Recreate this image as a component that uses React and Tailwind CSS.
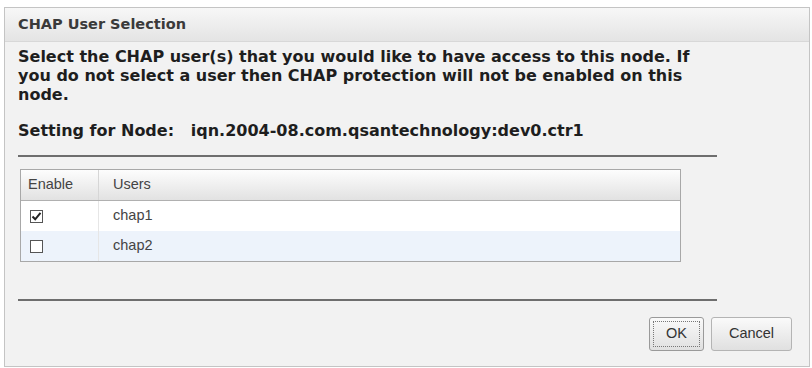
import React from "react";

const CheckBox = ({ checked }) => (
  <div className="w-[13px] h-[13px] border border-[#555] bg-white flex items-center justify-center">
    {checked && (
      <svg width="11" height="11" viewBox="0 0 11 11">
        <path d="M1.5 5.5 L4.2 8.3 L9.5 1.8" fill="none" stroke="#222" strokeWidth="2" />
      </svg>
    )}
  </div>
);

const users = [
  { name: "chap1", checked: true, bg: "bg-white" },
  { name: "chap2", checked: false, bg: "bg-[#edf3fb]" },
];

export default function App() {
  return (
    <div className="w-[812px] h-[368px] bg-white pt-[7px] pl-[4px] pr-[2px] pb-[1px]">
      <div className="h-full border border-[#c4c4c4] bg-[#f2f2f2] flex flex-col" style={{ fontFamily: "Tahoma, 'DejaVu Sans', sans-serif" }}>
        <div className="h-[34px] bg-gradient-to-b from-[#f7f7f7] to-[#e4e4e4] border-b border-[#d8d8d8] flex items-center px-[13px]">
          <span className="text-[14.5px] font-bold text-[#3a3a3a]">CHAP User Selection</span>
        </div>
        <div className="px-[13px] pt-[5px] flex flex-col">
          <p className="text-[16px] leading-[19px] font-bold text-[#1e1e1e] w-[700px]">
            Select the CHAP user(s) that you would like to have access to this node. If you do not select a user then CHAP protection will not be enabled on this node.
          </p>
          <p className="mt-[17px] text-[16px] leading-[19px] font-bold text-[#1e1e1e]">
            Setting for Node:&nbsp;&nbsp;&nbsp;iqn.2004-08.com.qsantechnology:dev0.ctr1
          </p>
          <div className="mt-[15px] w-[699px] h-[2px] bg-[#6e6e6e]" />
          <div className="mt-[12px] ml-[2px] w-[661px] border border-[#a8a8a8] text-[14.5px] text-[#444]" style={{ fontFamily: "'Liberation Sans', Arial, sans-serif" }}>
            <div className="flex h-[31px] bg-gradient-to-b from-[#fdfdfd] to-[#e2e2e2] border-b border-[#b0b0b0]">
              <div className="w-[78px] border-r border-[#d6d6d6] flex items-center pl-[7px]">Enable</div>
              <div className="flex-1 flex items-center pl-[14px]">Users</div>
            </div>
            {users.map((u) => (
              <div key={u.name} className={`flex h-[30px] ${u.bg}`}>
                <div className="w-[78px] border-r border-[#e6e6e6] flex items-center pl-[9px]">
                  <CheckBox checked={u.checked} />
                </div>
                <div className="flex-1 flex items-center pl-[14px]">{u.name}</div>
              </div>
            ))}
          </div>
          <div className="mt-[37px] w-[699px] h-[2px] bg-[#6e6e6e]" />
          <div className="mt-[16px] flex justify-end gap-[7px] pr-[4px] text-[14.5px] text-[#333]" style={{ fontFamily: "'Liberation Sans', Arial, sans-serif" }}>
            <button className="w-[55px] h-[34px] rounded-[3px] border border-[#9a9a9a] bg-gradient-to-b from-[#fafafa] to-[#e0e0e0] p-[3px]">
              <div className="w-full h-full border border-dotted border-[#777] flex items-center justify-center">OK</div>
            </button>
            <button className="w-[81px] h-[34px] rounded-[3px] border border-[#b4b4b4] bg-gradient-to-b from-[#fafafa] to-[#e0e0e0] flex items-center justify-center">
              Cancel
            </button>
          </div>
        </div>
      </div>
    </div>
  );
}
